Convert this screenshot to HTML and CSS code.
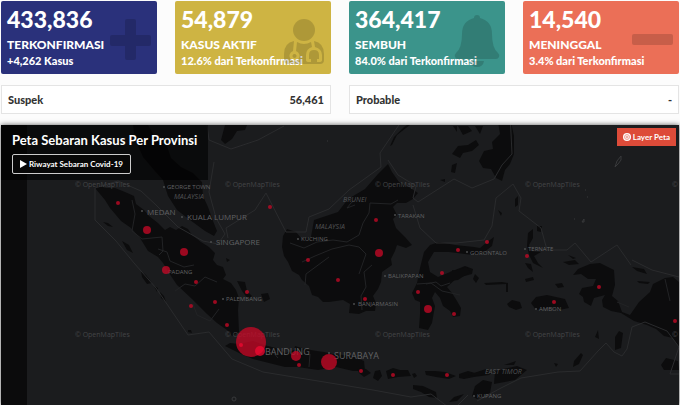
FILE: index.html
```html
<!DOCTYPE html>
<html lang="id">
<head>
<meta charset="utf-8">
<meta name="viewport" content="width=device-width, initial-scale=1">
<title>Sebaran Kasus Covid-19</title>
<link rel="stylesheet" href="styles.css">
</head>
<body>
<main class="page">
  <section class="cards">
    <article class="card card--navy">
      <p class="card__value">433,836</p>
      <h2 class="card__label">TERKONFIRMASI</h2>
      <p class="card__note">+4,262 Kasus</p>
      <svg class="card__icon" viewBox="0 0 48 56" aria-hidden="true"><path d="M19 6q0-2 2-2h7q2 0 2 2v14h13q2 0 2 2v7q0 2-2 2H30v12q0 2-2 2h-7q-2 0-2-2V31H6q-2 0-2-2v-7q0-2 2-2h13z"/></svg>
    </article>
    <article class="card card--gold">
      <p class="card__value">54,879</p>
      <h2 class="card__label">KASUS AKTIF</h2>
      <p class="card__note">12.6% dari Terkonfirmasi</p>
      <svg class="card__icon" viewBox="0 0 48 56" aria-hidden="true">
        <circle cx="24" cy="15" r="11"/>
        <path fill-rule="evenodd" d="M14 26l-1 10a5 5 0 1 0 3 0l1-9q7 4 14 0l1 5q-6 2-6 8v5q0 2 3 2h2v-3h-2v-4q0-5 5-5t5 5v4h-2v3h2q3 0 3-2v-5q0-6-7-8l-1-6q10 2 10 13v6q0 4-4 4H8q-4 0-4-4v-6Q4 28 14 26zM15 39a2 2 0 1 1-1 0z"/>
      </svg>
    </article>
    <article class="card card--teal">
      <p class="card__value">364,417</p>
      <h2 class="card__label">SEMBUH</h2>
      <p class="card__note">84.0% dari Terkonfirmasi</p>
      <svg class="card__icon" viewBox="0 0 48 56" aria-hidden="true"><path d="M20 3q0-3 3-3t3 3q12 3 12 16 0 14 6 19 2 2 1 4-1 2-3 2H4q-2 0-3-2-1-2 1-4 6-5 6-19Q8 6 20 3zM16 46h14q-1 6-7 6t-7-6z"/></svg>
    </article>
    <article class="card card--coral">
      <p class="card__value">14,540</p>
      <h2 class="card__label">MENINGGAL</h2>
      <p class="card__note">3.4% dari Terkonfirmasi</p>
      <svg class="card__icon" viewBox="0 0 48 56" aria-hidden="true"><rect x="4" y="19" width="41" height="11" rx="2"/></svg>
    </article>
  </section>

  <dl class="stats">
    <div class="stat"><dt>Suspek</dt><dd>56,461</dd></div>
    <div class="stat"><dt>Probable</dt><dd>-</dd></div>
  </dl>

  <section class="map">
    <svg class="map__canvas" viewBox="1 125 678 280" role="img" aria-label="Peta sebaran kasus di Indonesia">
      <rect class="edge" x="0" y="124" width="27" height="282"/>

      <g class="land">
        <path d="M95 188l4-2 7 2 9 0 10 4 9 4 2 8 8 6 5 6 9 7 7 7 5-3 6 3 6-4 6 3 4 6 9 7 8 5 6 6-2 7 4 5 6 2 3 8-3 4 8 4 5 7 3 8-1 12 1 22-7 4-5-6-10-7-10-9-15-15-15-14-8-12-6-10-5-6-10-6-8-13-9-10-10-7-11-13-5-8z"/>
        <path d="M133 125l2 14 8 18 11 13 9 10 5 16 9 14 13 10 15 11 9 5 3-5-4-10-5-14-5-11-1-14-9-9-12-6-10-9-4-12-10-5-9-16z"/>
        <path d="M225 125h22l-2 5-8 1-5 8-7 5-4-4z"/>
        <path d="M388 164l4 8 7 10 10 5 9 6-5 6-7 4h-9l-4 4 4 8-4 4 3 9 9 9 7 8-6 3-9-3-2 6-4 8 1 6-10 7-1 10-3 7-5 7 3 7-1 8-9 0-7 3-10-1 1-9-7-4-14 2-6 0-5-5-6-2-3-9-7-6-3-5-7-4-4-9-4-6-2-9 1-11 4-7 9 3 6 7 9-2 3-17 24-8 10-13 17-10 13-15 8-8z"/>
        <path d="M410 125l-4 3-9 7-5 10-2 1 4-9 10-10 3-2z"/>
        <path d="M230 343l9 1 14-3 11 4 12 3 10 5 8-3 1-4 10 3 12 2 7 1 9 2 10 1 9 1 12 5 1 10-12 0-17-4-18 3-20-3-13 0-20-5-12-3-12-5-10-5-6-3z"/>
        <path d="M357 368l9 1 5 4-7 4-5-4zM375 371l5-1 2 6-4 5-5-3zM386 371l7-3 7 2 8 0 3 6-13 1-10 2zM412 374l3-1 2 3-3 2zM425 371l10 0 10 1 11 4-7 3-13-2-10-2zM459 374l9-3 7 2 10-3 8 2-4 3-15 2-10 2-5-1zM413 385l10 1 13 6 1 6-8-1-8-5-8-3z"/>
        <path d="M420 268l4-16 6-7 9-3 16 3 19 2 6 1 7-6 7-5-2 9-9 7-10 2-24-3-15 0-6 10 2 10 8 5 17-7 10-4 8 3-1 5-15 4-10 9 5 6 5 8 4 7-1 8-7 1-3-6-7-5-3-8-5-6-3 6 3 8-3 17-4 7-9-2 1-14 0-12-5-2-3-7 5-10z"/>
        <path d="M492 142l8-8-2-12h13l3 14 0 18-4 10-5 6-3 11-6-3-5-9-8-1-4-7 5-10 9-2zM452 154l6-8 10-1 8-5 3 5-7 6-9 2-3 5zM452 165l5-2-2 10-4-1zM458 126h10l4 5-9 4zM475 126l8 0-3 8zM440 180l5-1v3zM453 126h4v6z"/>
        <path d="M537 226l5 0-1 6-4-1zM528 233l5-4 0 9-4 7 1 6 11 1-7 4 4 7 5 5-10-5-4-8-2-9zM515 199l3-3 0 9-3 2zM498 210l4 3-1 3zM525 263l6 1 2 8-5-4zM563 262l12-2 4 4-10 1zM568 255l8 3-3 1z"/>
        <path d="M452 270l10 1-1 5-8 0zM475 274l4 4-3 5-3-4zM484 283l18-1 6 1v9l-2 0 0-8-20 1zM507 304l5-4 8 2 2 6-6 2-7-3zM525 279l8-2 1 3-8 2zM531 303l5-6 11-2 18 4 4 9-10 2-8-3-15 3zM555 284l7-1 2 4-6 1zM450 272l17-5 3 5-12 8-8 1z"/>
        <path d="M573 275l5-6 12-5 10-1 8 4 6 3 1 15-3 11 6 5 4 11 8 3 9-13 11-10 3-8 12-6 8-1 6 5v65l-6-9-9-2-8-7-9-4-13-4-13-8-10-2-8-4-1-7 3-5-11 3-3 8-7-4-1-5-4-3 3-6 11-2 3-7-8 0-7-5zM632 267l12 2 3 5-10-3zM637 281l13 1-2 2-9-1z"/>
        <path d="M615 337l4-6 4 2-2 15-6 2zM595 337l3-7 1 9zM574 361l7-8 2 2-4 9-6 3zM661 365l5-7 12 3 1 9-15 0zM504 365l12-4-2 4zM554 363l4 1-2 3z"/>
        <path d="M468 375l18-6 4 3-11 4zM495 371l22-5 10 4-12 10-21 4zM475 386l8-6 9 2-2 11-13 6-5-3zM449 402l5-5 10-3-7 7z"/>
        <path d="M103 222l5 1 5 4-5-1zM122 241l7 4 4 8-6-3zM141 271l5 4 6 8-5 1-5-7zM154 286l4 2-1 4zM160 292l4 4 2 6-5-4zM188 330l3 0 1 3-4-1zM237 281l8 1 2 9 5 5-4 3-6-8zM261 294l7-1 2 6-6 3zM226 258l4 2-3 2z"/>
      </g>

      <g class="lines">
        <path d="M95 188v32l21 21 18 22 22 25 32 47 21-3 23 27 31 13 55 9 55 9 38 7 20-3 25 19M95 188l23-7 23 10 15 14 22 22 25 14 15 3 7-10-9-16-7-26 5-30M207 125l2 15 22 9 27-9 26-14M228 238l-2-10 29-18 11-17 20 39 20 0 3-15 20-8 20-19 32-23-1-14 23-34M388 160l10 15 18 11-3 12 5 4 36-23 18 9 22-9 8-14 10-11-2-42M413 205l7 23 16 15 20 0 28-3 8-14 4-28 17-14 8 14-2 13 22 17 6 22 20 0 8-7 16 19 26-17 14 20M632 260l20 10 27 7M521 378l37-6 22-1 18-20 8-8 8 9 8 4 5-7 5-22 13-5 22 9 12 16-9 27h19M521 378l-20 10-24 13M458 405l10-10"/>
      </g>
      <g class="borders">
        <path d="M132 200l3 14-3 17 10 8 20-2 1 14-4 4M158 249l9 3 3 9 14 6 10-2M175 291l10-7 10 2 10-9 12 5M193 304l4 11 13 6 9-12M290 243l14 5 13-6 16-2 14 2 12-7 4-12 6-10 1-10 21 1 7-4M302 262l13-6 17-7 17-4 10 2 7 7-7 20M355 205l-8 3 4-5 5-4M362 310l-1-14 5-9-2-15 8-7M305 285l1-11 23-17M450 283l-9 3-5-4-10 2M417 284l14-1 11 8 18 4M272 351l6 7M310 354l-1 13M617 302l12 5M665 279l5 22"/>
      </g>

      <g class="watermark">
        <text x="75" y="187">© OpenMapTiles</text><text x="225" y="187">© OpenMapTiles</text><text x="375" y="187">© OpenMapTiles</text><text x="525" y="187">© OpenMapTiles</text><text x="672" y="187">©</text>
        <text x="75" y="337">© OpenMapTiles</text><text x="225" y="337">© OpenMapTiles</text><text x="375" y="337">© OpenMapTiles</text><text x="525" y="337">© OpenMapTiles</text><text x="672" y="337">©</text>
      </g>

      <g class="places places--large">
        <text x="147" y="215">MEDAN</text><text x="187" y="220">KUALA LUMPUR</text><text x="216" y="245">SINGAPORE</text>
      </g>
      <g class="places places--city">
        <text x="265" y="355">BANDUNG</text><text x="334" y="359">SURABAYA</text>
      </g>
      <g class="places">
        <text x="167" y="189">GEORGE TOWN</text><text x="301" y="241">KUCHING</text><text x="398" y="218">TARAKAN</text><text x="168" y="274">PADANG</text><text x="226" y="301">PALEMBANG</text><text x="388" y="278">BALIKPAPAN</text><text x="358" y="306">BANJARMASIN</text><text x="470" y="255">GORONTALO</text><text x="528" y="251">TERNATE</text><text x="539" y="311">AMBON</text><text x="477" y="398">KUPANG</text>
      </g>
      <g class="places places--country">
        <text x="174" y="199">MALAYSIA</text><text x="315" y="229">MALAYSIA</text><text x="343" y="202">BRUNEI</text><text x="485" y="374">EAST TIMOR</text>
      </g>
      <g class="towns">
        <circle cx="142" cy="211" r="1"/><circle cx="182" cy="217" r="1"/><circle cx="211" cy="242" r="1"/><circle cx="164" cy="187" r="1"/><circle cx="298" cy="239" r="1"/><circle cx="395" cy="215" r="1"/><circle cx="223" cy="299" r="1"/><circle cx="385" cy="276" r="1"/><circle cx="354" cy="304" r="1"/><circle cx="467" cy="252" r="1"/><circle cx="525" cy="249" r="1"/><circle cx="536" cy="309" r="1"/><circle cx="474" cy="396" r="1"/><circle cx="329" cy="353" r="1"/>
        <path d="M615 167l2-6 4-5v4l-3 4zM587 197h1M585 190h1M582 222l2-3v3zM574 219h1M327 141h1M232 399a2 2 0 1 0 4 0a2 2 0 1 0-4 0"/>
      </g>

      <g class="cases">
        <circle cx="118" cy="203" r="2"/><circle cx="147" cy="230" r="4"/><circle cx="184" cy="252" r="4"/><circle cx="166" cy="270" r="4"/><circle cx="196" cy="282" r="2"/><circle cx="191" cy="306" r="2"/><circle cx="215" cy="302" r="2"/><circle cx="227" cy="325" r="2"/><circle cx="247" cy="292" r="2"/><circle cx="270" cy="207" r="2"/><circle cx="308" cy="260" r="2"/><circle cx="338" cy="280" r="2"/><circle cx="376" cy="220" r="2"/><circle cx="379" cy="253" r="4"/><circle cx="365" cy="299" r="2"/><circle cx="442" cy="273" r="2"/><circle cx="418" cy="292" r="2"/><circle cx="428" cy="309" r="4"/><circle cx="454" cy="314" r="2"/><circle cx="458" cy="250" r="2"/><circle cx="487" cy="242" r="2"/><circle cx="527" cy="256" r="2"/><circle cx="599" cy="287" r="2"/><circle cx="554" cy="302" r="2"/><circle cx="675" cy="321" r="2"/><circle cx="251" cy="342" r="15"/><circle class="hot" cx="241" cy="345" r="2"/><circle class="hot" cx="260" cy="351" r="5"/><circle cx="296" cy="356" r="5"/><circle cx="299" cy="365" r="2"/><circle cx="329" cy="362" r="8"/><circle cx="361" cy="371" r="2"/><circle cx="393" cy="375" r="2"/><circle cx="447" cy="375" r="2"/>
      </g>
    </svg>

    <div class="map__panel">
      <h2 class="map__title">Peta Sebaran Kasus Per Provinsi</h2>
      <button class="map__history" type="button">
        <svg class="play" viewBox="0 0 7 8" aria-hidden="true"><path d="M0 0l7 4-7 4z"/></svg>Riwayat Sebaran Covid-19
      </button>
    </div>
    <button class="map__layer" type="button">
      <svg class="target" viewBox="0 0 16 16" aria-hidden="true"><circle class="target__disc" cx="8" cy="8" r="8"/><circle class="target__ring" cx="8" cy="8" r="5"/><circle class="target__ring" cx="8" cy="8" r="2"/></svg>Layer Peta
    </button>
  </section>
</main>
</body>
</html>
```
FILE: styles.css
```css
* { box-sizing: border-box; }

body {
  margin: 0;
  background: #fcfcfc;
  color: #333;
  font-family: Lato, "Liberation Sans", sans-serif;
  overflow-x: hidden;
}

h2, p, dl, dd { margin: 0; }

.page {
  display: flex;
  flex-direction: column;
  gap: 11px;
  padding: 1px 1px 0;
}

.cards {
  display: grid;
  grid-template-columns: repeat(4, 1fr);
  gap: 18px;
}

.card {
  position: relative;
  padding: 4px 6px 6px;
  border-radius: 2px;
  color: #fff;
  white-space: nowrap;
}

.card--navy { background: #2a317b; }
.card--gold { background: #ceb443; }
.card--teal { background: #3b948b; }
.card--coral { background: #eb6f57; }

.card__value { font-size: 23px; line-height: 28px; font-weight: 900; }
.card__label { margin-top: 4px; font-size: 12px; line-height: 16px; font-weight: 900; }
.card__note { font-size: 11px; line-height: 15px; font-weight: 900; }

.card__icon {
  position: absolute;
  top: 14px;
  right: 3px;
  width: 48px;
  height: 56px;
  fill: #000;
  opacity: 0.15;
}

.stats {
  display: grid;
  grid-template-columns: 1fr 1fr;
  gap: 18px;
}

.stat {
  display: flex;
  justify-content: space-between;
  padding: 5px 6px;
  border: 1px solid #e4e4e4;
  background: #fff;
  font-size: 11px;
  line-height: 17px;
  font-weight: 900;
}

.map {
  position: relative;
  background: #1b1c1e;
  box-shadow: 0 0 5px #555;
}

.map__canvas {
  display: block;
  width: 100%;
  height: auto;
}

.edge { fill: #0b0b0c; }
.land { fill: #0c0c0d; }
.lines, .borders { fill: none; stroke: #2a2b2d; stroke-width: 1; }
.borders { stroke: #222325; }
.watermark { fill: #444547; font: 7px "Open Sans", sans-serif; }
.places { fill: #606163; font: 6px "Open Sans", sans-serif; }
.places--large { font-size: 8px; }
.places--city { font-size: 9px; }
.places--country { fill: #505153; font-size: 7px; font-style: italic; }
.towns { fill: #4a4b4d; }
.towns path { fill: none; stroke: #38393b; stroke-width: 1; }
.cases { fill: #cb0827; fill-opacity: 0.75; }
.cases .hot { fill: #f00a32; }

.map__panel {
  position: absolute;
  top: 0;
  left: 0;
  padding: 6px 11px;
  background: rgba(0, 0, 0, 0.6);
  color: #fff;
}

.map__title {
  margin-bottom: 5px;
  font-size: 13px;
  line-height: 18px;
  font-weight: 700;
}

button {
  display: flex;
  align-items: center;
  margin: 0;
  color: #fff;
  font-family: inherit;
  font-weight: 700;
  cursor: pointer;
}

.map__history {
  gap: 2px;
  padding: 1px 7px;
  border: 1px solid #ccc;
  border-radius: 2px;
  background: #080808;
  font-size: 8px;
  line-height: 16px;
}

.play { width: 7px; height: 8px; fill: #fff; }

.map__layer {
  position: absolute;
  top: 3px;
  right: 3px;
  gap: 2px;
  padding: 1px 6px;
  border: 0;
  background: #dd4b39;
  font-size: 8px;
  line-height: 16px;
}

.target { width: 8px; height: 8px; }
.target__disc { fill: #fff; }
.target__ring { fill: none; stroke: #dd4b39; stroke-width: 1; }
```
